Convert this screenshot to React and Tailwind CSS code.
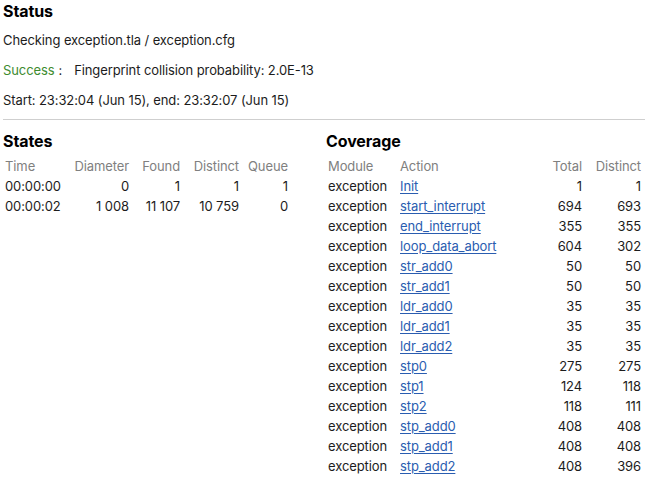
export default function App() {
  const states = [
    ["00:00:00", "0", "1", "1", "1"],
    ["00:00:02", "1 008", "11 107", "10 759", "0"],
  ];
  const cov = [
    ["Init", "1", "1"],
    ["start_interrupt", "694", "693"],
    ["end_interrupt", "355", "355"],
    ["loop_data_abort", "604", "302"],
    ["str_add0", "50", "50"],
    ["str_add1", "50", "50"],
    ["ldr_add0", "35", "35"],
    ["ldr_add1", "35", "35"],
    ["ldr_add2", "35", "35"],
    ["stp0", "275", "275"],
    ["stp1", "124", "118"],
    ["stp2", "118", "111"],
    ["stp_add0", "408", "408"],
    ["stp_add1", "408", "408"],
    ["stp_add2", "408", "396"],
  ];
  return (
    <div className="w-[646px] h-[478px] bg-white text-[13px] tracking-[-0.1px] text-[#1c1c1c] pl-[3px] overflow-hidden" style={{ fontFamily: 'Inter, "Noto Sans", sans-serif' }}>
      <div className="h-[23px] leading-[23px] text-[16px] font-bold text-black">Status</div>
      <div className="mt-[2px] h-[30px] leading-[30px]">Checking exception.tla / exception.cfg</div>
      <div className="h-[30px] leading-[30px] flex">
        <span className="text-[#3d8b2f]">Success</span>
        <span className="ml-[4px]">:</span>
        <span className="ml-[12px]">Fingerprint collision probability: 2.0E-13</span>
      </div>
      <div className="h-[30px] leading-[30px]">Start: 23:32:04 (Jun 15), end: 23:32:07 (Jun 15)</div>
      <div className="mt-[4px] mr-[1px] border-t border-[#cfcfcf]"></div>
      <div className="flex mt-[11px]">
        <div className="w-[323px] shrink-0">
          <div className="h-[20px] leading-[20px] text-[16px] font-bold text-black">States</div>
          <div className="mt-[5px] grid grid-cols-[62px_66px_51px_59px_49px] leading-[20px]">
            <div className="px-[2px] text-[#808080]">Time</div>
            <div className="px-[2px] text-right text-[#808080]">Diameter</div>
            <div className="px-[2px] text-right text-[#808080]">Found</div>
            <div className="px-[2px] text-right text-[#808080]">Distinct</div>
            <div className="px-[2px] text-right text-[#808080]">Queue</div>
            {states.map((r, i) => (
              <div key={i} className="contents">
                <div className="px-[2px]">{r[0]}</div>
                <div className="px-[2px] text-right">{r[1]}</div>
                <div className="px-[2px] text-right">{r[2]}</div>
                <div className="px-[2px] text-right">{r[3]}</div>
                <div className="px-[2px] text-right">{r[4]}</div>
              </div>
            ))}
          </div>
        </div>
        <div className="flex-1">
          <div className="h-[20px] leading-[20px] text-[16px] font-bold text-black">Coverage</div>
          <div className="mt-[5px] grid grid-cols-[72px_132px_54px_59px] leading-[20px]">
            <div className="px-[2px] text-[#808080]">Module</div>
            <div className="px-[2px] text-[#808080]">Action</div>
            <div className="px-[2px] text-right text-[#808080]">Total</div>
            <div className="px-[2px] text-right text-[#808080]">Distinct</div>
            {cov.map((r, i) => (
              <div key={i} className="contents">
                <div className="px-[2px]">exception</div>
                <div className="px-[2px]"><span className="text-[#2a5db0] underline underline-offset-[1.5px]">{r[0]}</span></div>
                <div className="px-[2px] text-right">{r[1]}</div>
                <div className="px-[2px] text-right">{r[2]}</div>
              </div>
            ))}
          </div>
        </div>
      </div>
    </div>
  );
}
